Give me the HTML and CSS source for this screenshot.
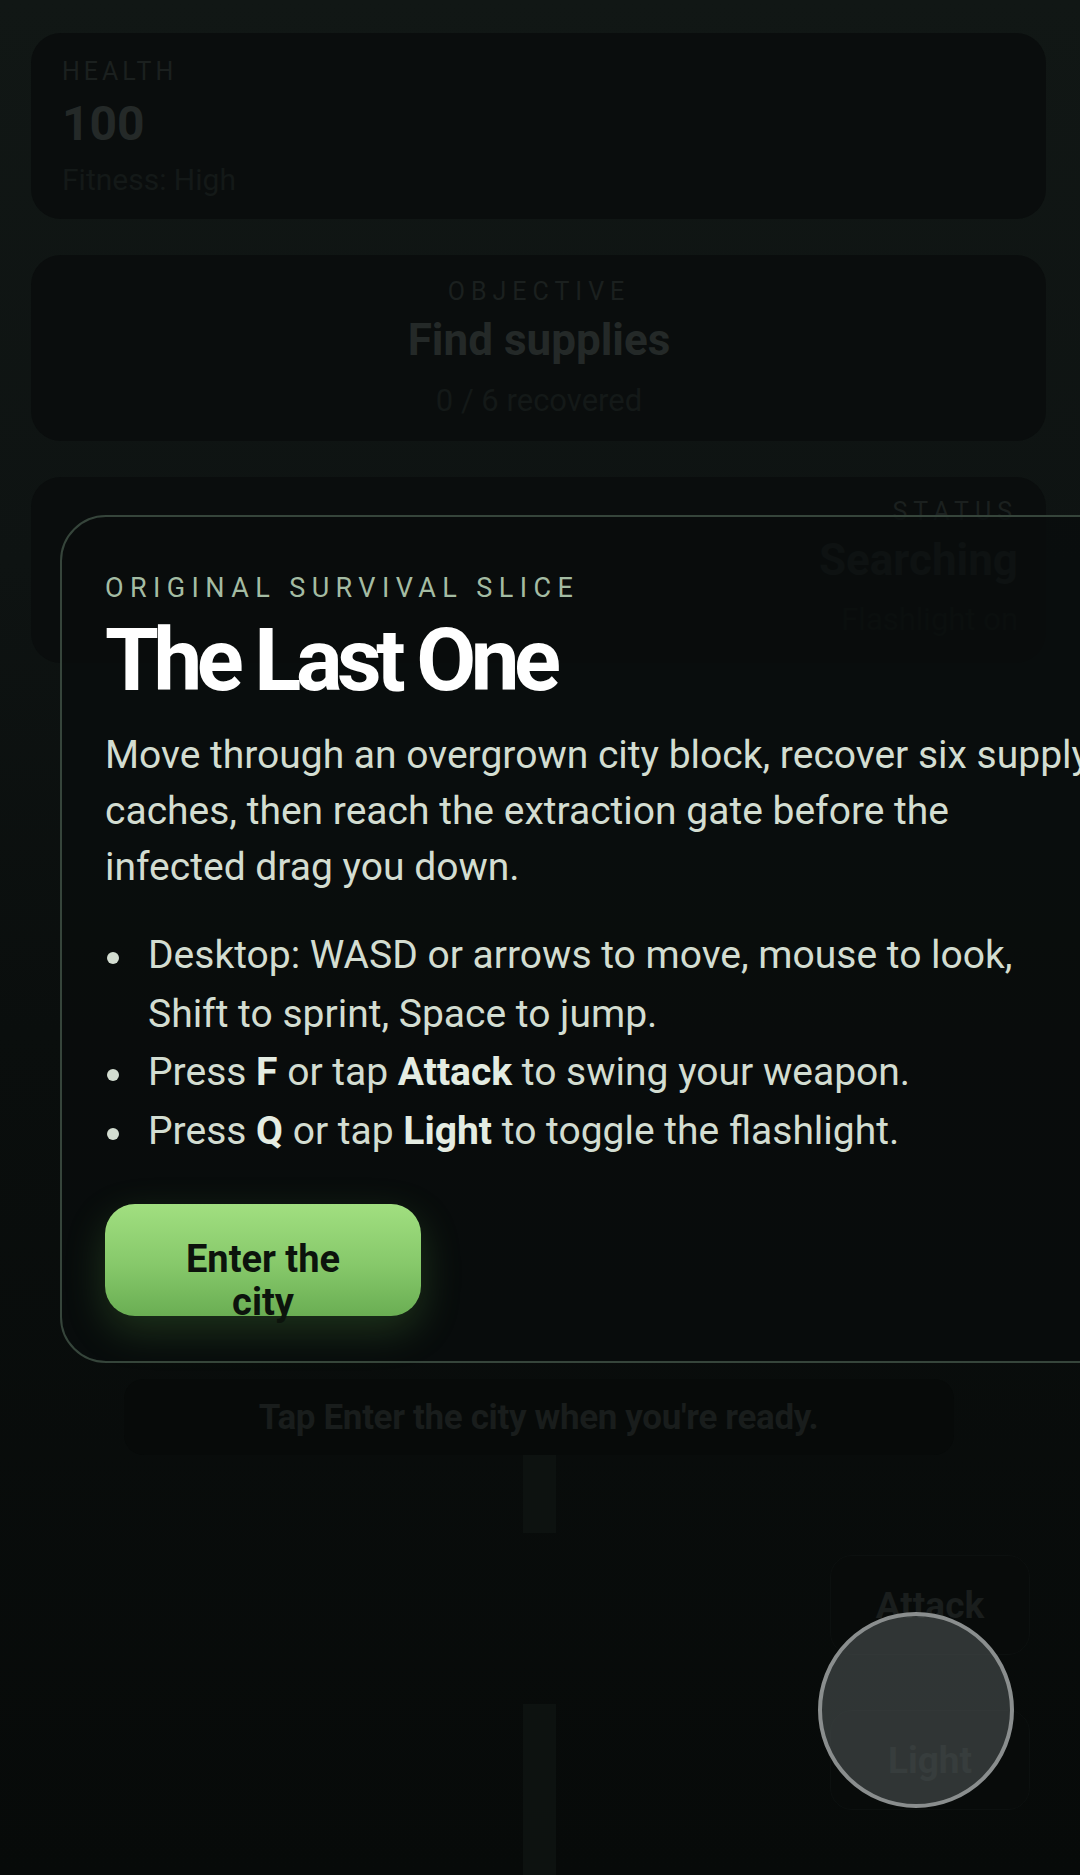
FILE: index.html
```html
<!DOCTYPE html>
<html lang="en">
<head>
<meta charset="utf-8">
<title>The Last One</title>
<link rel="stylesheet" href="styles.css">
</head>
<body>
<div class="screen">
  <div class="scene" aria-hidden="true">
    <div class="road-mark mark-a"></div>
    <div class="road-mark mark-b"></div>
  </div>

  <div class="hud">
    <section class="card health">
      <div class="card-label">Health</div>
      <div class="card-value">100</div>
      <div class="card-sub">Fitness: High</div>
    </section>
    <section class="card objective">
      <div class="card-label">Objective</div>
      <div class="card-value">Find supplies</div>
      <div class="card-sub">0 / 6 recovered</div>
    </section>
    <section class="card status">
      <div class="card-label">Status</div>
      <div class="card-value">Searching</div>
      <div class="card-sub">Flashlight on</div>
    </section>

    <div class="prompt">Tap Enter the city when you're ready.</div>

    <div class="controls">
      <button class="ctrl">Attack</button>
      <button class="ctrl">Light</button>
    </div>
  </div>

  <div class="look-pad" aria-hidden="true"></div>

  <div class="modal">
    <div class="eyebrow">Original survival slice</div>
    <h1 class="title">The Last One</h1>
    <p class="intro">Move through an overgrown city block, recover six supply caches, then reach the extraction gate before the infected drag you down.</p>
    <ul class="tips">
      <li>Desktop: WASD or arrows to move, mouse to look, Shift to sprint, Space to jump.</li>
      <li>Press <b>F</b> or tap <b>Attack</b> to swing your weapon.</li>
      <li>Press <b>Q</b> or tap <b>Light</b> to toggle the flashlight.</li>
    </ul>
    <button class="start">Enter the city</button>
  </div>
</div>
</body>
</html>
```

FILE: styles.css
```css
* { box-sizing: border-box; }

html, body {
  margin: 0;
  padding: 0;
  background: #090c0b;
}

.screen {
  position: relative;
  width: 1080px;
  height: 1875px;
  overflow: hidden;
  font-family: Roboto, "Liberation Sans", sans-serif;
  background: linear-gradient(180deg, #111715 0%, #0e1312 30%, #0a0e0d 55%, #070a09 100%);
}

/* ---------- scene (free canvas) ---------- */
.scene {
  position: absolute;
  inset: 0;
}
.road-mark {
  position: absolute;
  left: 523px;
  width: 33px;
  background: #0d1210;
}
.mark-a { top: 1438px; height: 95px; }
.mark-b { top: 1704px; height: 171px; }

/* ---------- HUD ---------- */
.hud {
  position: relative;
  display: flex;
  flex-direction: column;
  gap: 36px;
  padding: 33px 34px 0 31px;
  height: 100%;
}

.card {
  height: 186px;
  border-radius: 30px;
  background: #0a0d0d;
  padding: 24px 30px 0 31px;
  display: flex;
  flex-direction: column;
}
.card-label {
  font-size: 25px;
  line-height: 30px;
  letter-spacing: 0.16em;
  text-transform: uppercase;
  color: #1b201f;
}
.card-value {
  margin-top: 7px;
  font-size: 48px;
  line-height: 60px;
  font-weight: 700;
  color: #242928;
}
.card-sub {
  margin-top: 6px;
  font-size: 30px;
  line-height: 40px;
  color: #141918;
}

.objective { text-align: center; padding-top: 22px; }
.objective .card-label { letter-spacing: 0.24em; }
.objective .card-value { font-size: 44px; line-height: 56px; margin-top: 5px; }
.objective .card-sub { margin-top: 13px; font-size: 31px; }

.status { text-align: right; padding-right: 28px; padding-top: 20px; }
.status .card-label { letter-spacing: 0.24em; }
.status .card-value { font-size: 44px; line-height: 56px; margin-top: 5px; }
.status .card-sub { margin-top: 12px; font-size: 31px; }

.prompt {
  align-self: center;
  width: 830px;
  height: 76px;
  margin-top: 680px;
  border-radius: 20px;
  background: #070a09;
  display: flex;
  align-items: center;
  justify-content: center;
  font-size: 35px;
  font-weight: 700;
  color: #191d1c;
  letter-spacing: -0.01em;
}

.controls {
  align-self: flex-end;
  display: flex;
  flex-direction: column;
  gap: 55px;
  margin-top: 64px;
  margin-right: 16px;
}
.ctrl {
  width: 200px;
  height: 100px;
  border: 1px solid #0c100f;
  border-radius: 22px;
  background: #080b0a;
  font-family: Roboto, "Liberation Sans", sans-serif;
  font-size: 37px;
  font-weight: 700;
  color: #1a1e1d;
}

/* touch look pad, drawn over the dimmed scene */
.look-pad {
  position: absolute;
  left: 818px;
  top: 1612px;
  width: 196px;
  height: 196px;
  border-radius: 50%;
  border: 4px solid #8a8e8e;
  background: rgba(78, 84, 84, 0.58);
}

/* ---------- intro modal ---------- */
.modal {
  position: absolute;
  left: 60px;
  top: 515px;
  width: 1085px;
  border: 2px solid #36453b;
  border-radius: 46px;
  background: rgba(9, 13, 12, 0.8);
  padding: 55px 45px 45px 43px;
  color: #d3ddd1;
}

.eyebrow {
  font-size: 27px;
  line-height: 32px;
  letter-spacing: 0.237em;
  text-transform: uppercase;
  color: #a4bca3;
}

.title {
  margin: 11px 0 0;
  font-size: 87px;
  line-height: 91px;
  font-weight: 700;
  letter-spacing: -0.063em;
  color: #ffffff;
}

.intro {
  margin: 21px 0 0;
  font-size: 39px;
  line-height: 56px;
}

.tips {
  list-style: none;
  margin: 31px 0 0;
  padding: 0 0 0 43px;
  font-size: 39px;
  line-height: 58.5px;
}
.tips li {
  position: relative;
}
.tips li::before {
  content: "";
  position: absolute;
  left: -41px;
  top: 26px;
  width: 12px;
  height: 12px;
  border-radius: 50%;
  background: #d3ddd1;
}
.tips b {
  font-weight: 700;
  color: #e4ece2;
}

.start {
  display: block;
  margin-top: 44px;
  width: 316px;
  height: 112px;
  padding: 34px 50px 0;
  border: none;
  border-radius: 30px;
  background: linear-gradient(180deg, #a1df80 0%, #86c86a 55%, #6aae53 100%);
  box-shadow: 0 14px 40px rgba(110, 190, 80, 0.22);
  font-family: Roboto, "Liberation Sans", sans-serif;
  font-size: 38px;
  line-height: 43px;
  font-weight: 700;
  color: #0c130c;
  text-align: center;
  vertical-align: top;
  overflow: visible;
}
```
